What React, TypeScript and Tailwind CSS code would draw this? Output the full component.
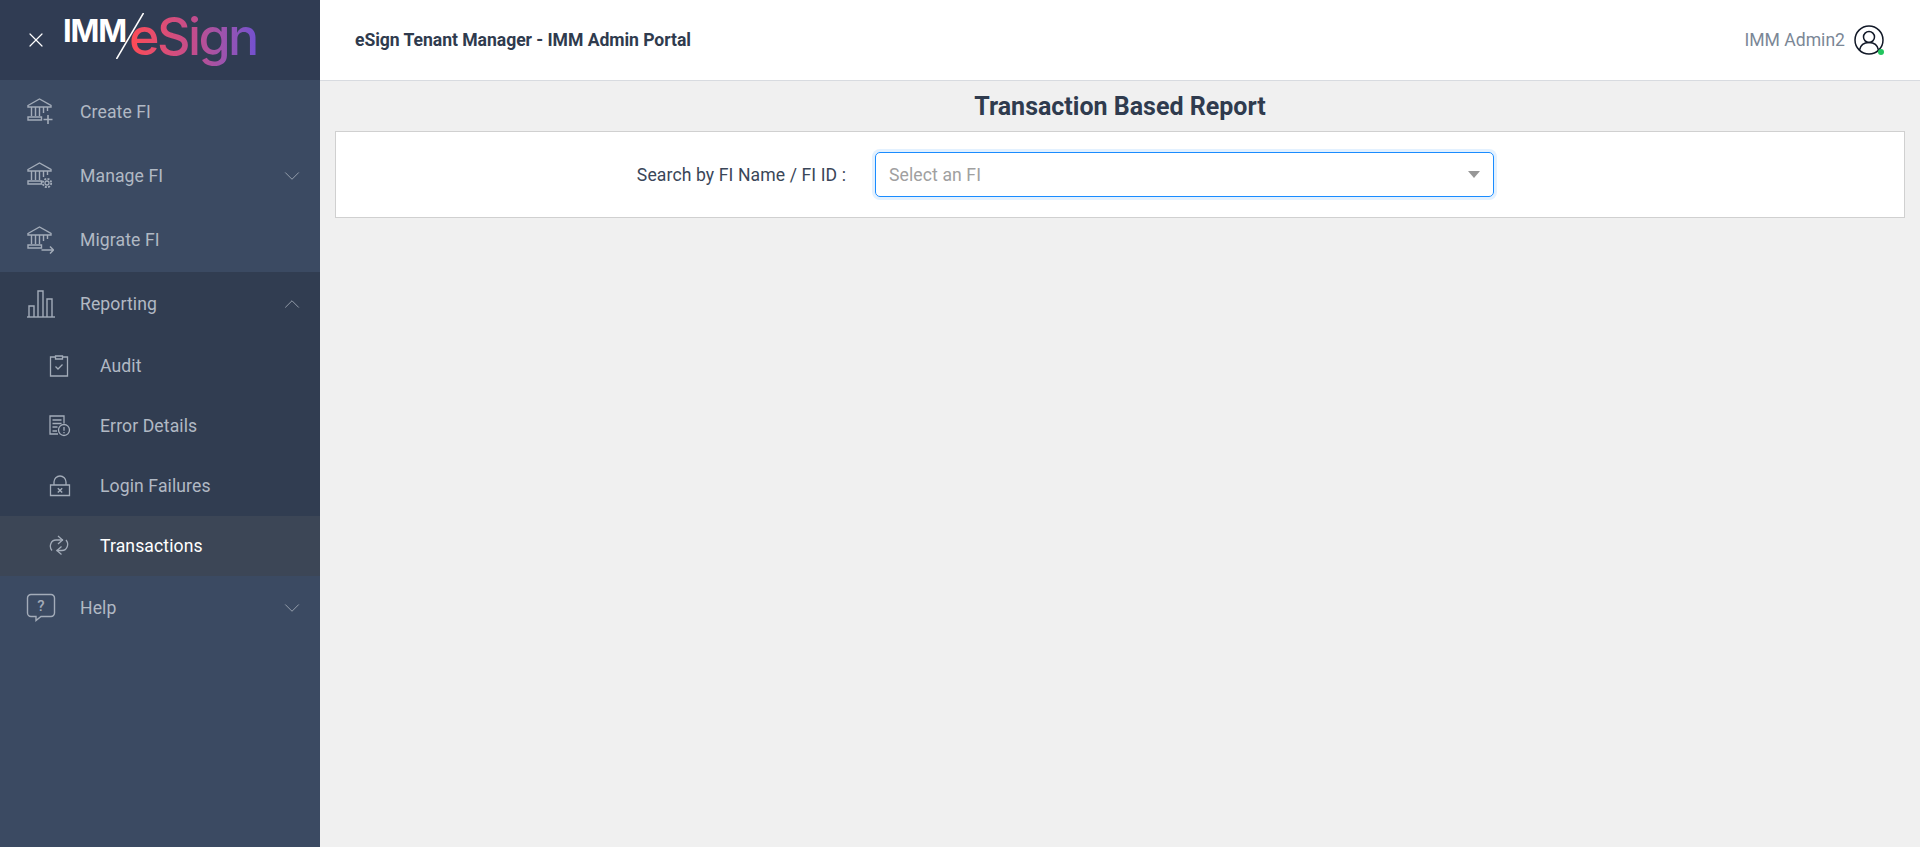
import { ChevronDown, ChevronUp, X } from 'lucide-react';
import type { ReactNode } from 'react';

const Bank = ({ children }: { children?: ReactNode }) => (
  <svg width="28" height="28" viewBox="0 0 28 28" fill="none" stroke="currentColor" strokeWidth="1.4" className="text-[#a3acb9]">
    <path d="M2 7.500 L13.500 1 L25 7.500 V9 H2 Z" />
    <path d="M5.500 9v9M9.500 9v9M13.500 9v9M17.500 9v6M21.500 9v4" />
    <path d="M2 19h13.500v3H2z" />
    {children}
  </svg>
);

const iconCreate = (
  <Bank>
    <path d="M22 17v9M17.500 21.500h9" strokeWidth="1.600" />
  </Bank>
);

const iconManage = (
  <Bank>
    <circle cx="21" cy="21" r="2" strokeWidth="1.300" />
    <circle cx="21" cy="21" r="4.200" strokeWidth="1.800" strokeDasharray="2 1.300" />
  </Bank>
);

const iconMigrate = (
  <Bank>
    <path d="M15.500 24h12M24 20.500l3.500 3.500-3.500 3.500" strokeWidth="1.500" />
  </Bank>
);

const iconReporting = (
  <svg width="30" height="30" viewBox="0 0 30 30" fill="none" stroke="currentColor" strokeWidth="1.400" className="text-[#a3acb9]">
    <path d="M1 28h28" />
    <path d="M3 28V17h5v11M12 28V2h5v26M21 28V10h5v18" />
  </svg>
);

const iconHelp = (
  <svg width="30" height="30" viewBox="0 0 30 30" fill="none" stroke="currentColor" strokeWidth="1.400" className="text-[#a3acb9]">
    <path d="M5 1.500h20a3.500 3.500 0 0 1 3.500 3.500v15a3.500 3.500 0 0 1-3.500 3.500H15l-5 4v-4H5A3.500 3.500 0 0 1 1.500 20V5A3.500 3.500 0 0 1 5 1.500Z" />
    <text x="15" y="18" textAnchor="middle" fontSize="15" fontWeight="500" fill="currentColor" stroke="none" fontFamily="Roboto, sans-serif">?</text>
  </svg>
);

const iconAudit = (
  <svg width="20" height="22" viewBox="0 0 20 22" fill="none" stroke="currentColor" strokeWidth="1.300" className="text-[#a3acb9]">
    <path d="M6.500 2H1.500v19h17V2h-5" />
    <path d="M6.500 1h7v3h-7z" />
    <path d="M6.500 11.500l2.500 2.500 4.500-4.500" />
  </svg>
);

const iconError = (
  <svg width="22" height="22" viewBox="0 0 22 22" fill="none" stroke="currentColor" strokeWidth="1.300" className="text-[#a3acb9]">
    <path d="M9 19H1V1h14v7.500" />
    <path d="M3.500 5h9M3.500 8.500h9M3.500 12h5M3.500 16h4.500" />
    <circle cx="15" cy="15" r="5.500" />
    <path d="M15 12v3.700M15 17v1.300" />
  </svg>
);

const iconLogin = (
  <svg width="22" height="22" viewBox="0 0 22 22" fill="none" stroke="currentColor" strokeWidth="1.300" className="text-[#a3acb9]">
    <path d="M1.500 10h19v10.500h-19z" />
    <path d="M5 10V7a6 6 0 0 1 12 0v3" />
    <path d="M8.800 13.200l4.400 4.400M13.200 13.200l-4.400 4.400" strokeWidth="1.400" />
  </svg>
);

const iconTransactions = (
  <svg width="22" height="22" viewBox="0 0 22 22" fill="none" stroke="currentColor" strokeWidth="1.300" className="text-[#a3acb9]">
    <path d="M3 15.500C-0.500 11.500 2 5 7 5h7" />
    <path d="M9 1l4.500 4-4.500 4" />
    <path d="M17 5c3.500 4 1 10.500-4 10.500H7.500" />
    <path d="M12.500 11.500L8 15.500l4.500 4" />
  </svg>
);

const NavItem = ({ icon, label, chevron }: { icon: ReactNode; label: string; chevron?: 'up' | 'down' }) => (
  <div className="flex h-16 items-center pl-[26px] pr-[15px]">
    <div className="flex w-[54px] shrink-0 items-center">{icon}</div>
    <span className="flex-1 text-[17.6px] tracking-[0.1px] text-[#b1b9c4]">{label}</span>
    {chevron === 'down' && <ChevronDown size={26} strokeWidth={0.7} className="text-[#b1b9c4]" />}
    {chevron === 'up' && <ChevronUp size={26} strokeWidth={0.7} className="text-[#b1b9c4]" />}
  </div>
);

const SubItem = ({ icon, label, active }: { icon: ReactNode; label: string; active?: boolean }) => (
  <div className={`flex h-[60px] items-center pl-[49px] ${active ? 'bg-[#3c4656]' : ''}`}>
    <div className="flex w-[51px] shrink-0 items-center">{icon}</div>
    <span className={`text-[17.6px] tracking-[0.1px] ${active ? 'text-white' : 'text-[#b1b9c4]'}`}>{label}</span>
  </div>
);

const App = () => {
  return (
    <div className="flex h-[847px] w-full font-['Roboto',sans-serif]">
      {/* Sidebar */}
      <aside className="flex w-[320px] shrink-0 flex-col bg-[#3b4a62]">
        <div className="flex h-[80px] items-center bg-[#303c53] pl-[24px]">
          <X size={24} strokeWidth={1.2} className="text-white" />
          <div className="relative ml-[15px] h-[80px] w-[200px]">
            <span className="absolute left-[0px] top-[11px] font-['Inter',sans-serif] text-[31px] font-bold leading-[40px] tracking-[-1.2px] text-white">IMM</span>
            <svg width="28" height="46" viewBox="0 0 28 46" className="absolute left-[53px] top-[13px]" fill="none" stroke="white" strokeWidth="1.500">
              <path d="M27.500 0 L0.500 46" />
            </svg>
            <span className="absolute left-[66px] top-[1px] bg-gradient-to-r from-[#fe4a52] via-[#c24c8c] to-[#7250d0] bg-clip-text pb-[10px] font-['Inter',sans-serif] text-[52px] font-medium leading-[72px] tracking-[-2.6px] text-transparent">eSign</span>
          </div>
        </div>
        <NavItem icon={iconCreate} label="Create FI" />
        <NavItem icon={iconManage} label="Manage FI" chevron="down" />
        <NavItem icon={iconMigrate} label="Migrate FI" />
        <div className="bg-[#313d51]">
          <NavItem icon={iconReporting} label="Reporting" chevron="up" />
          <SubItem icon={iconAudit} label="Audit" />
          <SubItem icon={iconError} label="Error Details" />
          <SubItem icon={iconLogin} label="Login Failures" />
          <SubItem icon={iconTransactions} label="Transactions" active />
        </div>
        <NavItem icon={iconHelp} label="Help" chevron="down" />
      </aside>

      {/* Main */}
      <div className="flex min-w-0 flex-1 flex-col bg-[#f0f0f0]">
        <header className="flex h-[81px] items-center justify-between border-b border-[#d8dbe0] bg-white pl-[35px] pr-[36px]">
          <h1 className="text-[17.6px] font-bold tracking-[-0.05px] text-[#2f3b4e]">eSign Tenant Manager - IMM Admin Portal</h1>
          <div className="flex items-center gap-[9px]">
            <span className="text-[17.6px] text-[#7b8796]">IMM Admin2</span>
            <div className="relative h-[30px] w-[30px]">
              <svg width="30" height="30" viewBox="0 0 30 30" fill="none" stroke="#111827" strokeWidth="1.500">
                <circle cx="15" cy="15" r="14" />
                <circle cx="15" cy="12" r="5.500" />
                <path d="M5.500 25c1-5 4.500-7.500 9.500-7.500s8.500 2.500 9.500 7.500" />
              </svg>
              <span className="absolute bottom-[0px] right-[0px] h-[6px] w-[6px] rounded-full bg-[#22c55e]" />
            </div>
          </div>
        </header>
        <div className="px-[15px]">
          <h2 className="flex h-[50px] items-center justify-center pt-[2px] text-[25px] font-bold text-[#2f3b4e]">Transaction Based Report</h2>
          <div className="flex h-[87px] items-center border border-[#d0d0d0] bg-white">
            <label className="w-[510px] pt-[2px] text-right text-[17.6px] tracking-[0.1px] text-[#3a4658]">Search by FI Name / FI ID :</label>
            <div className="ml-[29px] flex h-[45px] w-[619px] items-center justify-between rounded-[5px] border border-[#1a8cff] pl-[13px] pr-[13px] shadow-[0_0_0_3px_#e3f1ff]">
              <span className="pt-[1px] text-[17.6px] tracking-[0.1px] text-[#a0a0a0]">Select an FI</span>
              <span className="h-0 w-0 border-x-[6px] border-t-[7px] border-x-transparent border-t-[#979797]" />
            </div>
          </div>
        </div>
      </div>
    </div>
  );
};

export default App;
